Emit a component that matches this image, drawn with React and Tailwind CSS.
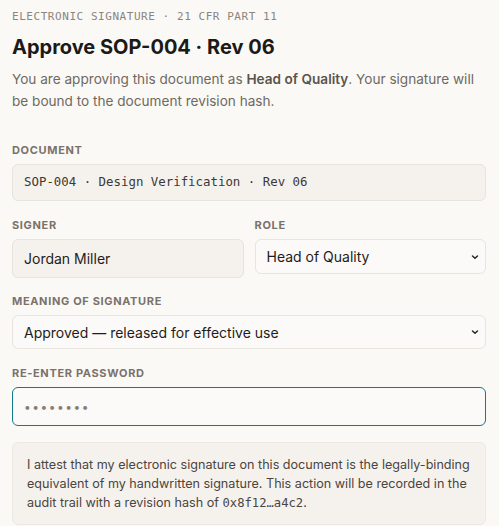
import React from "react";

const sans = { fontFamily: "Inter, 'Noto Sans', sans-serif" };
const mono = { fontFamily: "'DejaVu Sans Mono', 'Liberation Mono', monospace" };

function Label({ children }) {
  return (
    <div className="text-[11px] font-bold uppercase tracking-[0.06em] text-[#7a726a] leading-[14px] mb-[7px]">
      {children}
    </div>
  );
}

function Chevron() {
  return (
    <svg width="8" height="8" viewBox="0 0 8 8" className="shrink-0">
      <path d="M1.5 3 L4 5.3 L6.5 3" fill="none" stroke="#2a2622" strokeWidth="1.5" strokeLinecap="round" strokeLinejoin="round" />
    </svg>
  );
}

function SelectBox({ value, className = "" }) {
  return (
    <div className={`flex items-center justify-between pl-[11px] pr-[6px] rounded-[6px] border border-[#e8e4de] bg-[#fbfaf8] text-[14px] text-[#1f1c19] ${className}`}>
      <span>{value}</span>
      <Chevron />
    </div>
  );
}

export default function App() {
  return (
    <div className="min-h-[526px] w-full bg-[#faf9f6] pl-[12px] pr-[13px] pt-[10px]" style={sans}>
      <div className="text-[11px] tracking-[0.05em] text-[#8b857e] leading-[14px]" style={mono}>
        ELECTRONIC SIGNATURE · 21 CFR PART 11
      </div>
      <h1 className="mt-[10px] text-[20px] font-bold text-[#1c1a17] leading-[26px]">
        Approve SOP-004 · Rev 06
      </h1>
      <p className="mt-[8px] text-[13.6px] leading-[22px] text-[#6f6961]">
        You are approving this document as <b className="font-semibold text-[#5a544d]">Head of Quality</b>. Your signature will be bound to the document revision hash.
      </p>

      <div className="mt-[31px]">
        <Label>Document</Label>
        <div className="h-[37px] flex items-center px-[11px] rounded-[6px] border border-[#e7e3dd] bg-[#f5f2ee] text-[12.4px] text-[#3d3833]" style={mono}>
          SOP-004 · Design Verification · Rev 06
        </div>
      </div>

      <div className="mt-[17px] grid grid-cols-2 gap-[11px]">
        <div>
          <Label>Signer</Label>
          <div className="h-[39px] flex items-center px-[11px] rounded-[6px] border border-[#e7e3dd] bg-[#f5f2ee] text-[14px] text-[#1f1c19]">
            Jordan Miller
          </div>
        </div>
        <div>
          <Label>Role</Label>
          <SelectBox value="Head of Quality" className="mt-[3px] h-[35px]" />
        </div>
      </div>

      <div className="mt-[16px]">
        <Label>Meaning of signature</Label>
        <SelectBox value="Approved — released for effective use" className="h-[34px]" />
      </div>

      <div className="mt-[17px]">
        <Label>Re-enter password</Label>
        <div className="h-[39px] flex items-center px-[11px] rounded-[6px] border-[1.5px] border-[#137a8c] bg-[#fbfaf8]">
          <span className="text-[12px] tracking-[1.5px] text-[#857e76]">••••••••</span>
        </div>
      </div>

      <div className="mt-[16px] rounded-[6px] border border-[#ece8e2] bg-[#f5f2ee] px-[14px] pt-[12px] pb-[11px] text-[12.6px] leading-[19px] text-[#4b4540]">
        I attest that my electronic signature on this document is the legally-binding equivalent of my handwritten signature. This action will be recorded in the audit trail with a revision hash of <span style={mono} className="text-[12.2px]">0x8f12…a4c2</span>.
      </div>
    </div>
  );
}
